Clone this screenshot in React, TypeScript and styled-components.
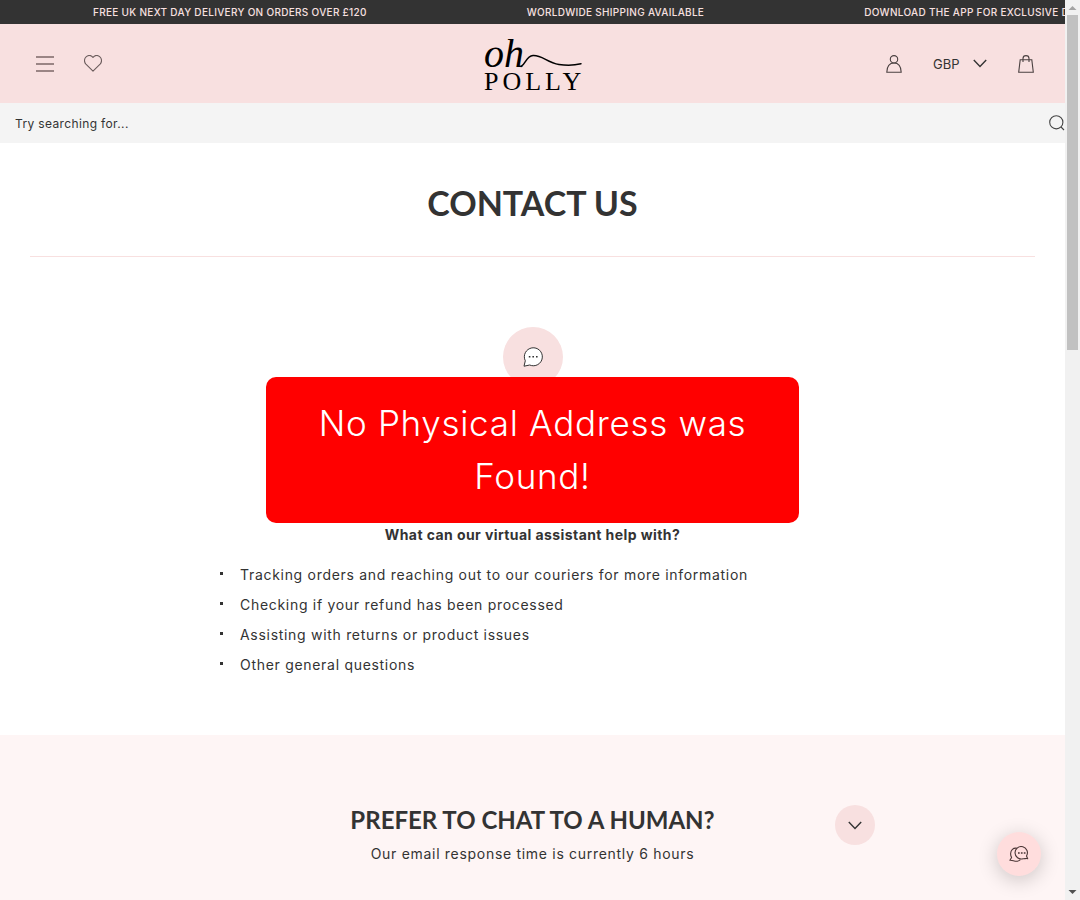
import React from "react";
import styled, { createGlobalStyle } from "styled-components";

const ink = "#333333";
const blush = "#f8e0e0";
const bodyFont = `"Inter", "Liberation Sans", sans-serif`;
const headingFont = `"Lato", "Liberation Sans", sans-serif`;

const GlobalStyle = createGlobalStyle`
  *, *::before, *::after { box-sizing: border-box; }
  body {
    margin: 0;
    background: #ffffff;
    color: ${ink};
    font-family: ${bodyFont};
    font-size: 14px;
    line-height: 30px;
  }
  button, input, select { font: inherit; color: inherit; border: 0; padding: 0; background: none; }
  button, select { cursor: pointer; }
`;

const Page = styled.div`
  display: flex;
  flex-direction: column;
  min-height: 100vh;
  margin-right: 15px;
`;

const Announcements = styled.div`
  display: flex;
  gap: 160px;
  height: 24px;
  padding-left: 93px;
  overflow: hidden;
  background: ${ink};
  color: ${blush};
  font-size: 10px;
  font-weight: 500;
  line-height: 24px;
  letter-spacing: 0.03em;
  white-space: nowrap;
  text-transform: uppercase;
`;

const Announcement = styled.span`
  flex: none;
`;

const Header = styled.header`
  display: grid;
  grid-template-columns: 1fr auto 1fr;
  align-items: center;
  height: 79px;
  background: ${blush};
`;

const HeaderGroup = styled.div<{ $end?: boolean }>`
  display: flex;
  align-items: center;
  justify-content: ${(p) => (p.$end ? "flex-end" : "flex-start")};
  padding: ${(p) => (p.$end ? "0 15px 0 0" : "0 0 0 21px")};
`;

const IconButton = styled.button`
  display: grid;
  place-items: center;
  width: 48px;
  height: 48px;
`;

const Currency = styled.label`
  position: relative;
  display: flex;
  align-items: center;
  width: 84px;

  svg {
    position: absolute;
    right: 15px;
    pointer-events: none;
  }
`;

const CurrencySelect = styled.select`
  appearance: none;
  width: 100%;
  height: 48px;
  padding-left: 15px;
  font-size: 13px;
`;

const LogoLink = styled.a`
  display: block;
  color: #000000;
  line-height: 0;

  svg { overflow: visible; }
`;

const SearchBar = styled.form`
  display: flex;
  align-items: center;
  height: 40px;
  padding-left: 15px;
  background: #f4f4f4;
`;

const SearchInput = styled.input`
  flex: 1;
  min-width: 0;
  height: 40px;
  font-size: 12px;
  letter-spacing: 0.03em;
  outline: none;

  &::placeholder { color: ${ink}; opacity: 1; }
`;

const SearchButton = styled.button`
  display: grid;
  place-items: center;
  width: 16px;
  height: 40px;
`;

const TitleBlock = styled.div`
  margin: 0 30px;
  padding: 36px 0 29px;
  border-bottom: 1px solid ${blush};
  text-align: center;
`;

const Title = styled.h1`
  margin: 0;
  font-family: ${headingFont};
  font-size: 34px;
  font-weight: 700;
  line-height: 48px;
`;

const Assistant = styled.section`
  display: flex;
  flex-direction: column;
  align-items: center;
  padding: 70px 30px 55px;
`;

const ChatBadge = styled.div`
  display: grid;
  place-items: center;
  width: 60px;
  height: 60px;
  margin-bottom: 133px;
  border-radius: 50%;
  background: ${blush};
`;

const Question = styled.h3`
  margin: 0 0 10px;
  font-size: 14px;
  font-weight: 700;
  line-height: 30px;
  letter-spacing: 0.03em;
`;

const TopicList = styled.ul`
  width: 100%;
  max-width: 625px;
  margin: 0;
  padding: 0;
  list-style: none;
`;

const Topic = styled.li`
  display: flex;
  align-items: center;
  gap: 17px;
  letter-spacing: 0.05em;

  &::before {
    content: "";
    width: 3px;
    height: 3px;
    margin-bottom: 3px;
    background: ${ink};
  }
`;

const Human = styled.section`
  flex: 1;
  padding: 70px 30px 30px;
  background: #fef5f5;
`;

const HumanRow = styled.div`
  display: grid;
  grid-template-columns: 40px 1fr 40px;
  max-width: 685px;
  margin: 0 auto;
  text-align: center;
`;

const HumanText = styled.div`
  grid-column: 2;
`;

const HumanTitle = styled.h2`
  margin: 0 0 4px;
  font-family: ${headingFont};
  font-size: 24px;
  font-weight: 700;
  line-height: 30px;
`;

const HumanNote = styled.p`
  margin: 0;
  letter-spacing: 0.05em;
`;

const ExpandButton = styled.button`
  display: grid;
  place-items: center;
  width: 40px;
  height: 40px;
  border-radius: 50%;
  background: ${blush};
`;

const Overlay = styled.div`
  position: fixed;
  inset: 0 15px 0 0;
  display: grid;
  place-items: center;
  pointer-events: none;
`;

const Alert = styled.div`
  width: 50%;
  padding: 20px;
  border-radius: 10px;
  background: #ff0000;
  color: #ffffff;
  font-size: 35px;
  font-weight: 300;
  line-height: 53px;
  letter-spacing: 0.02em;
  text-align: center;
`;

const ChatLauncher = styled.button`
  position: fixed;
  right: 39px;
  bottom: 24px;
  display: grid;
  place-items: center;
  width: 44px;
  height: 44px;
  border-radius: 50%;
  background: #ffdddd;
  box-shadow: 0 4px 20px rgba(0, 0, 0, 0.2);
`;

const ScrollTrack = styled.div`
  position: fixed;
  inset: 0 0 0 auto;
  display: flex;
  flex-direction: column;
  align-items: center;
  width: 15px;
  background: #f1f1f1;
`;

const ScrollThumb = styled.div`
  width: 11px;
  height: 335px;
  margin-bottom: auto;
  background: #c1c1c1;
`;

const ScrollArrow = styled.svg`
  flex: none;
  display: block;
`;

const Chevron = () => (
  <svg width="14" height="9" viewBox="0 0 14 9" fill="none" stroke="currentColor" strokeWidth="1.4" aria-hidden="true">
    <path d="M.8 1 7 7.4 13.2 1" />
  </svg>
);

const Logo = () => (
  <svg width="98" height="56" viewBox="0 0 98 56" fill="currentColor" aria-hidden="true">
    <text x="0" y="31" fontFamily="Liberation Serif, serif" fontStyle="italic" fontSize="40">oh</text>
    <path d="M37 30.500C42 28 42 20 49 19.500c9-.6 14 7 26 9 8 1.200 15 1 22-.7" fill="none" stroke="currentColor" strokeWidth="1.500" strokeLinecap="round" />
    <text x="0" y="54" fontFamily="Liberation Serif, serif" fontSize="26" letterSpacing="4">POLLY</text>
  </svg>
);

const topics = [
  "Tracking orders and reaching out to our couriers for more information",
  "Checking if your refund has been processed",
  "Assisting with returns or product issues",
  "Other general questions",
];

const announcements = [
  "Free UK next day delivery on orders over £120",
  "Worldwide shipping available",
  "Download the app for exclusive discounts",
];

export default function App() {
  return (
    <>
      <GlobalStyle />
      <Page>
        <Announcements>
          {announcements.map((text) => (
            <Announcement key={text}>{text}</Announcement>
          ))}
        </Announcements>

        <Header>
          <HeaderGroup>
            <IconButton aria-label="Menu">
              <svg width="18" height="16" viewBox="0 0 18 16" stroke="#9b8585" strokeWidth="2" aria-hidden="true">
                <path d="M0 1h18M0 8h18M0 15h18" />
              </svg>
            </IconButton>
            <IconButton aria-label="Wishlist">
              <svg width="18" height="17" viewBox="0 0 18 17" fill="none" stroke="#6b5c5c" strokeWidth="1.1" strokeLinejoin="round" aria-hidden="true">
                <path d="M9 16.2 1.9 9.1C-.1 7 .1 3.500 2.100 1.900 4.300.1 7.200.3 9 2.300c1.800-2 4.700-2.200 6.900-.4 2 1.600 2.200 5.100.2 7.200z" />
              </svg>
            </IconButton>
          </HeaderGroup>

          <LogoLink href="#" aria-label="Home">
            <Logo />
          </LogoLink>

          <HeaderGroup $end>
            <IconButton aria-label="Account">
              <svg width="16" height="18" viewBox="0 0 16 18" fill="none" stroke="#4a4040" strokeWidth="1.1" aria-hidden="true">
                <circle cx="8" cy="4.300" r="3.700" />
                <path d="M8 8C3.500 8 1 10.500.8 17.300h14.400C15 10.500 12.500 8 8 8z" />
              </svg>
            </IconButton>
            <Currency>
              <CurrencySelect aria-label="Currency" defaultValue="GBP">
                <option>GBP</option>
              </CurrencySelect>
              <Chevron />
            </Currency>
            <IconButton aria-label="Bag">
              <svg width="16" height="18" viewBox="0 0 16 18" fill="none" stroke="#4a4040" strokeWidth="1.100" aria-hidden="true">
                <path d="M2.200 4.700h11.600l1.500 12.600H.7z" />
                <path d="M5 7V3.500C5 1.700 6.200.6 8 .6s3 1.100 3 2.900V7" />
              </svg>
            </IconButton>
          </HeaderGroup>
        </Header>

        <SearchBar role="search">
          <SearchInput type="text" aria-label="Search" placeholder="Try searching for..." />
          <SearchButton type="button" aria-label="Search">
            <svg width="16" height="16" viewBox="0 0 16 16" fill="none" stroke="#444444" strokeWidth="1.1" aria-hidden="true">
              <circle cx="7.300" cy="7.300" r="6.600" />
              <path d="m12 12 3 3" />
            </svg>
          </SearchButton>
        </SearchBar>

        <main>
          <TitleBlock>
            <Title>CONTACT US</Title>
          </TitleBlock>
          <Assistant>
            <ChatBadge>
              <svg width="20" height="20" viewBox="0 0 20 20" fill="#ffffff" stroke="#333333" aria-hidden="true">
                <path d="M1 19.200 2.300 13.800A9 9 0 1 1 6.700 18z" strokeLinejoin="round" />
                <path d="M5.800 9.700h1.600m2 0H11m2 0h1.600" strokeWidth="1.600" />
              </svg>
            </ChatBadge>
            <Question>What can our virtual assistant help with?</Question>
            <TopicList>
              {topics.map((topic) => (
                <Topic key={topic}>{topic}</Topic>
              ))}
            </TopicList>
          </Assistant>
        </main>

        <Human>
          <HumanRow>
            <HumanText>
              <HumanTitle>PREFER TO CHAT TO A HUMAN?</HumanTitle>
              <HumanNote>Our email response time is currently 6 hours</HumanNote>
            </HumanText>
            <ExpandButton aria-label="Show contact form">
              <Chevron />
            </ExpandButton>
          </HumanRow>
        </Human>
      </Page>

      <ChatLauncher aria-label="Open chat">
        <svg width="20" height="16" viewBox="0 0 20 16" fill="none" stroke="#4a3535" strokeWidth="1.100" strokeLinejoin="round" aria-hidden="true">
          <path d="M8 2.200C4.300 1.500 1.600 4 1.600 7.800c0 1.500.4 2.700 1 3.700L.9 14.300c2.300-.4 4.700 1.300 7.500.9 1.300-.2 2.200-.7 3-1.500" />
          <path d="M18.700 12.700 17.500 10A6.200 6.200 0 1 0 14 12.700c1.500.3 3-.6 4.700 0z" />
          <path d="M9 7h1.700m1.200 0h1.700m1.200 0h1.700" strokeWidth="1.700" />
        </svg>
      </ChatLauncher>

      <Overlay>
        <Alert role="alert">No Physical Address was Found!</Alert>
      </Overlay>

      <ScrollTrack aria-hidden="true">
        <ScrollArrow width="15" height="15" viewBox="0 0 15 15">
          <path d="M3.500 10h8L7.500 6z" fill="#a3a3a3" />
        </ScrollArrow>
        <ScrollThumb />
        <ScrollArrow width="15" height="15" viewBox="0 0 15 15">
          <path d="M3.500 5h8l-4 4z" fill="#505050" />
        </ScrollArrow>
      </ScrollTrack>
    </>
  );
}
